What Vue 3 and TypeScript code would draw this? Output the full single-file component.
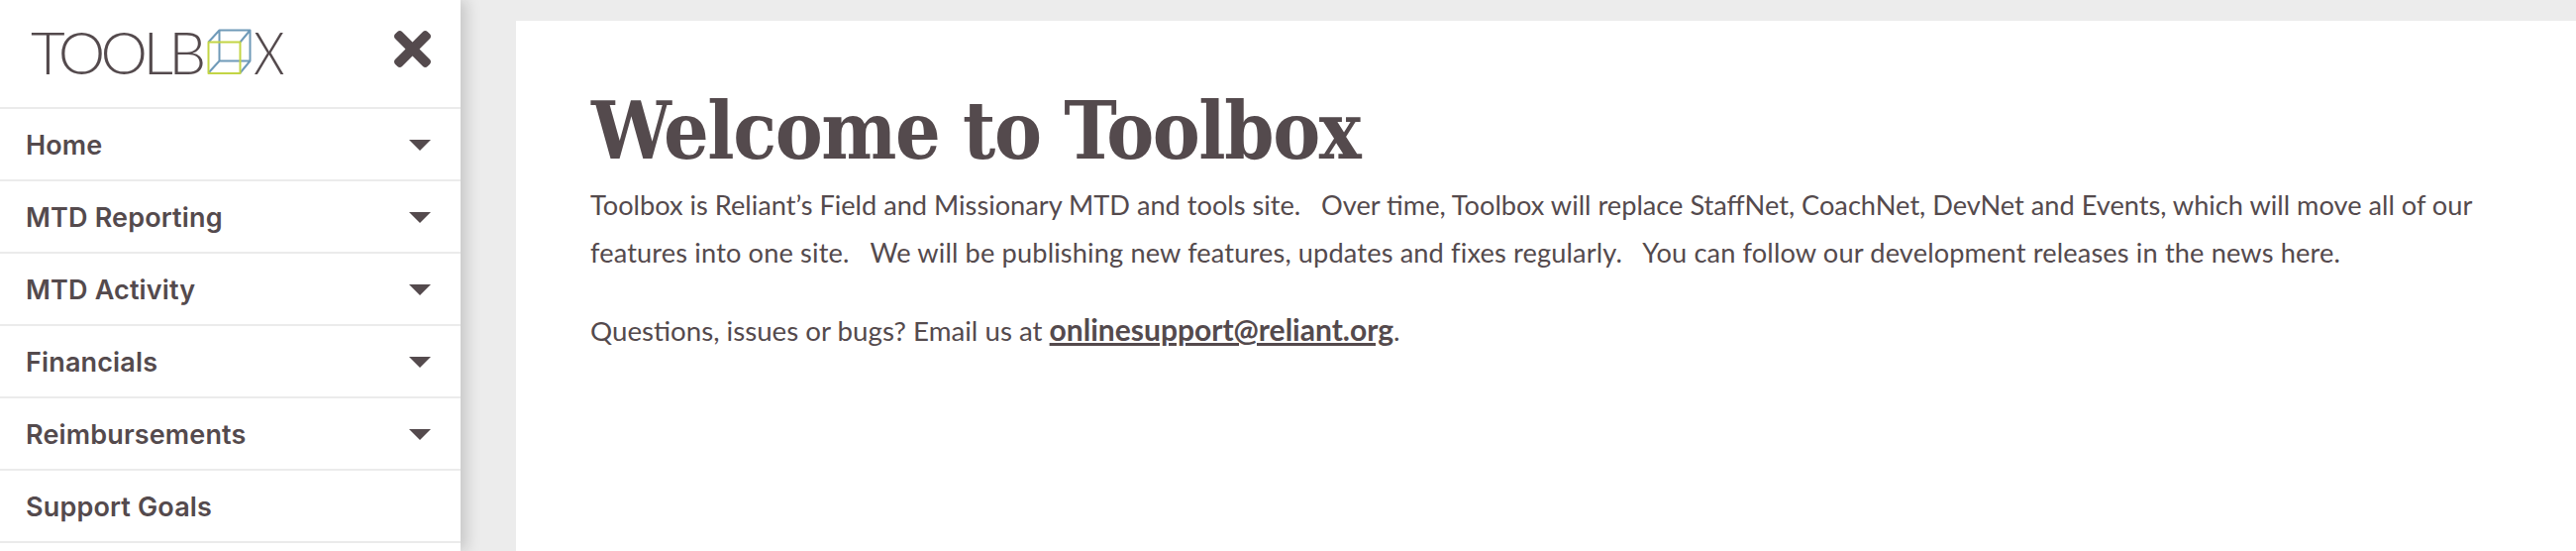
<script setup lang="ts">
interface Item { label: string; caret: boolean }
const items: Item[] = [
  { label: 'Home', caret: true },
  { label: 'MTD Reporting', caret: true },
  { label: 'MTD Activity', caret: true },
  { label: 'Financials', caret: true },
  { label: 'Reimbursements', caret: true },
  { label: 'Support Goals', caret: false },
]
</script>

<template>
  <div class="page">
    <aside class="sidebar">
      <div class="brand">
        <div class="logo">
          <span class="word">TOOLB</span>
          <svg class="cube" viewBox="0 0 46 47" width="46" height="47" fill="none" stroke-width="2" stroke-linejoin="round">
            <path d="M12.5 1.5H43.5V32.5H12.5ZM12.5 1.5L1.5 13.5M43.5 1.5L33.5 13.5M12.5 32.5L1.5 44.5M43.5 32.5L33.5 44.5" stroke="#6f9ab8" />
            <path d="M1.5 13.5H33.5V45H1.5Z" stroke="#c3d545" />
          </svg>
          <span class="end">X</span>
        </div>
        <svg class="close" viewBox="0 80 352 352" width="37" height="37">
          <path fill="#544a4d" d="M242.72 256l100.07-100.07c12.28-12.28 12.28-32.19 0-44.48l-22.24-22.24c-12.28-12.28-32.19-12.28-44.48 0L176 189.28 75.93 89.21c-12.28-12.28-32.19-12.28-44.48 0L9.21 111.45c-12.28 12.28-12.28 32.19 0 44.48L109.28 256 9.21 356.07c-12.28 12.28-12.28 32.19 0 44.48l22.24 22.24c12.28 12.28 32.2 12.28 44.48 0L176 322.72l100.07 100.07c12.28 12.28 32.2 12.28 44.48 0l22.24-22.24c12.28-12.28 12.28-32.19 0-44.48L242.72 256z" />
        </svg>
      </div>
      <nav>
        <a v-for="item in items" :key="item.label" class="row">
          <span>{{ item.label }}</span>
          <svg v-if="item.caret" class="caret" viewBox="0 0 22 11" width="22" height="11">
            <path fill="#544a4d" d="M0 0H22L11 11Z" />
          </svg>
        </a>
      </nav>
    </aside>
    <main class="card">
      <h1>Welcome to Toolbox</h1>
      <p>Toolbox is Reliant’s Field and Missionary MTD and tools site.&nbsp;&nbsp; Over time, Toolbox will replace StaffNet, CoachNet, DevNet and Events, which will move all of our <span class="loose">features into one site.&nbsp;&nbsp; We will be publishing new features, updates and fixes regularly.&nbsp;&nbsp; You can follow our development releases in the news here.</span></p>
      <p class="contact">Questions, issues or bugs? Email us at <a class="mail">onlinesupport@reliant.org</a>.</p>
    </main>
  </div>
</template>

<style>
html, body { margin: 0; background: #ececec; overflow: hidden; }
</style>

<style scoped>
.page {
  display: flex;
  width: 2601px;
  height: 556px;
  overflow: hidden;
  background: #ececec;
  color: #544a4d;
}
.sidebar {
  flex: 0 0 465px;
  height: 556px;
  background: #fff;
  box-shadow: 6px 0 14px rgba(0, 0, 0, 0.16);
  position: relative;
  z-index: 1;
}
.brand {
  height: 108px;
  box-sizing: border-box;
  display: flex;
  align-items: flex-start;
  justify-content: space-between;
  padding: 30px 30px 0 31px;
}
.logo {
  display: flex;
  align-items: flex-start;
  font-family: Lato, sans-serif;
  font-weight: 300;
  font-size: 60px;
  line-height: 45px;
  color: #544a4d;
}
.word { letter-spacing: -4.6px; }
.cube { margin: -1px 0 0 5px; }
.end { margin-left: 1px; display: inline-block; transform: scaleX(0.84); transform-origin: left center; }
.close { margin-top: 1px; }
.row {
  display: flex;
  align-items: center;
  justify-content: space-between;
  box-sizing: border-box;
  height: 73px;
  padding: 2px 30px 0 26px;
  border-top: 2px solid #ebebeb;
  font-family: Inter, sans-serif;
  font-weight: 600;
  font-size: 27px;
  letter-spacing: 0.15px;
}
.row:last-child { border-bottom: 2px solid #ebebeb; height: 75px; }
.card {
  flex: 1;
  margin: 21px 0 0 56px;
  background: #fff;
  padding: 64px 0 0 75px;
  font-family: Lato, sans-serif;
  font-size: 27.2px;
  line-height: 48px;
}
h1 {
  margin: 0 0 4px 1px;
  font-family: "DejaVu Serif Condensed", "DejaVu Serif", serif;
  font-stretch: condensed;
  font-size: 80px;
  letter-spacing: -1.4px;
  line-height: 94px;
  font-weight: 700;
}
p { margin: 0; width: 1940px; }
.loose { letter-spacing: 0.14px; }
.contact { margin-top: 29px; font-size: 27.7px; }
.mail { font-size: 30px; font-weight: 700; text-decoration: underline; }
</style>
